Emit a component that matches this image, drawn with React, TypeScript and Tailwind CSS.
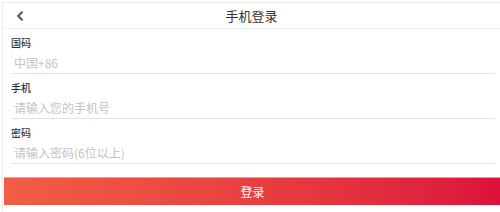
import React from 'react';

const fields = [
  { label: '国码', placeholder: '中国+86' },
  { label: '手机', placeholder: '请输入您的手机号' },
  { label: '密码', placeholder: '请输入密码(6位以上)' },
];

export default function App() {
  return (
    <div className="w-[500px] h-[212px] bg-white pl-[2px] pt-[2px] font-['Noto_Sans_CJK_SC','Noto_Sans',sans-serif]">
      <div className="h-full border-l border-t border-[#ececec]">
        {/* Header */}
        <div className="relative flex h-[26px] items-center justify-center border-b border-[#efefef]">
          <svg className="absolute left-[13px] top-[8px] h-[10px] w-[8px]" viewBox="0 0 8 10" fill="none">
            <path d="M6 1.2 L2.2 5 L6 8.8" stroke="#555" strokeWidth="2" strokeLinecap="round" strokeLinejoin="round" />
          </svg>
          <span className="text-[13px] leading-none text-[#333]">手机登录</span>
        </div>

        {/* Form */}
        <div className="pl-[8px] pr-[5px]">
          {fields.map((f) => (
            <div key={f.label} className="border-b border-[#e2e2e2] pb-[2px] pt-[8px]">
              <div className="text-[10px] leading-[12px] font-medium text-[#333]">{f.label}</div>
              <input
                className="mt-[6px] block h-[16px] w-full pl-[3px] text-[12px] leading-[16px] text-[#333] outline-none placeholder:text-[#c4c4c4]"
                placeholder={f.placeholder}
              />
            </div>
          ))}
        </div>

        <button className="mt-[13px] ml-[1px] flex h-[28px] w-[497px] items-center justify-center border-t border-[#f59a92] bg-gradient-to-r from-[#f25d45] to-[#dc103b] text-[12px] text-white">
          登录
        </button>
      </div>
    </div>
  );
}
